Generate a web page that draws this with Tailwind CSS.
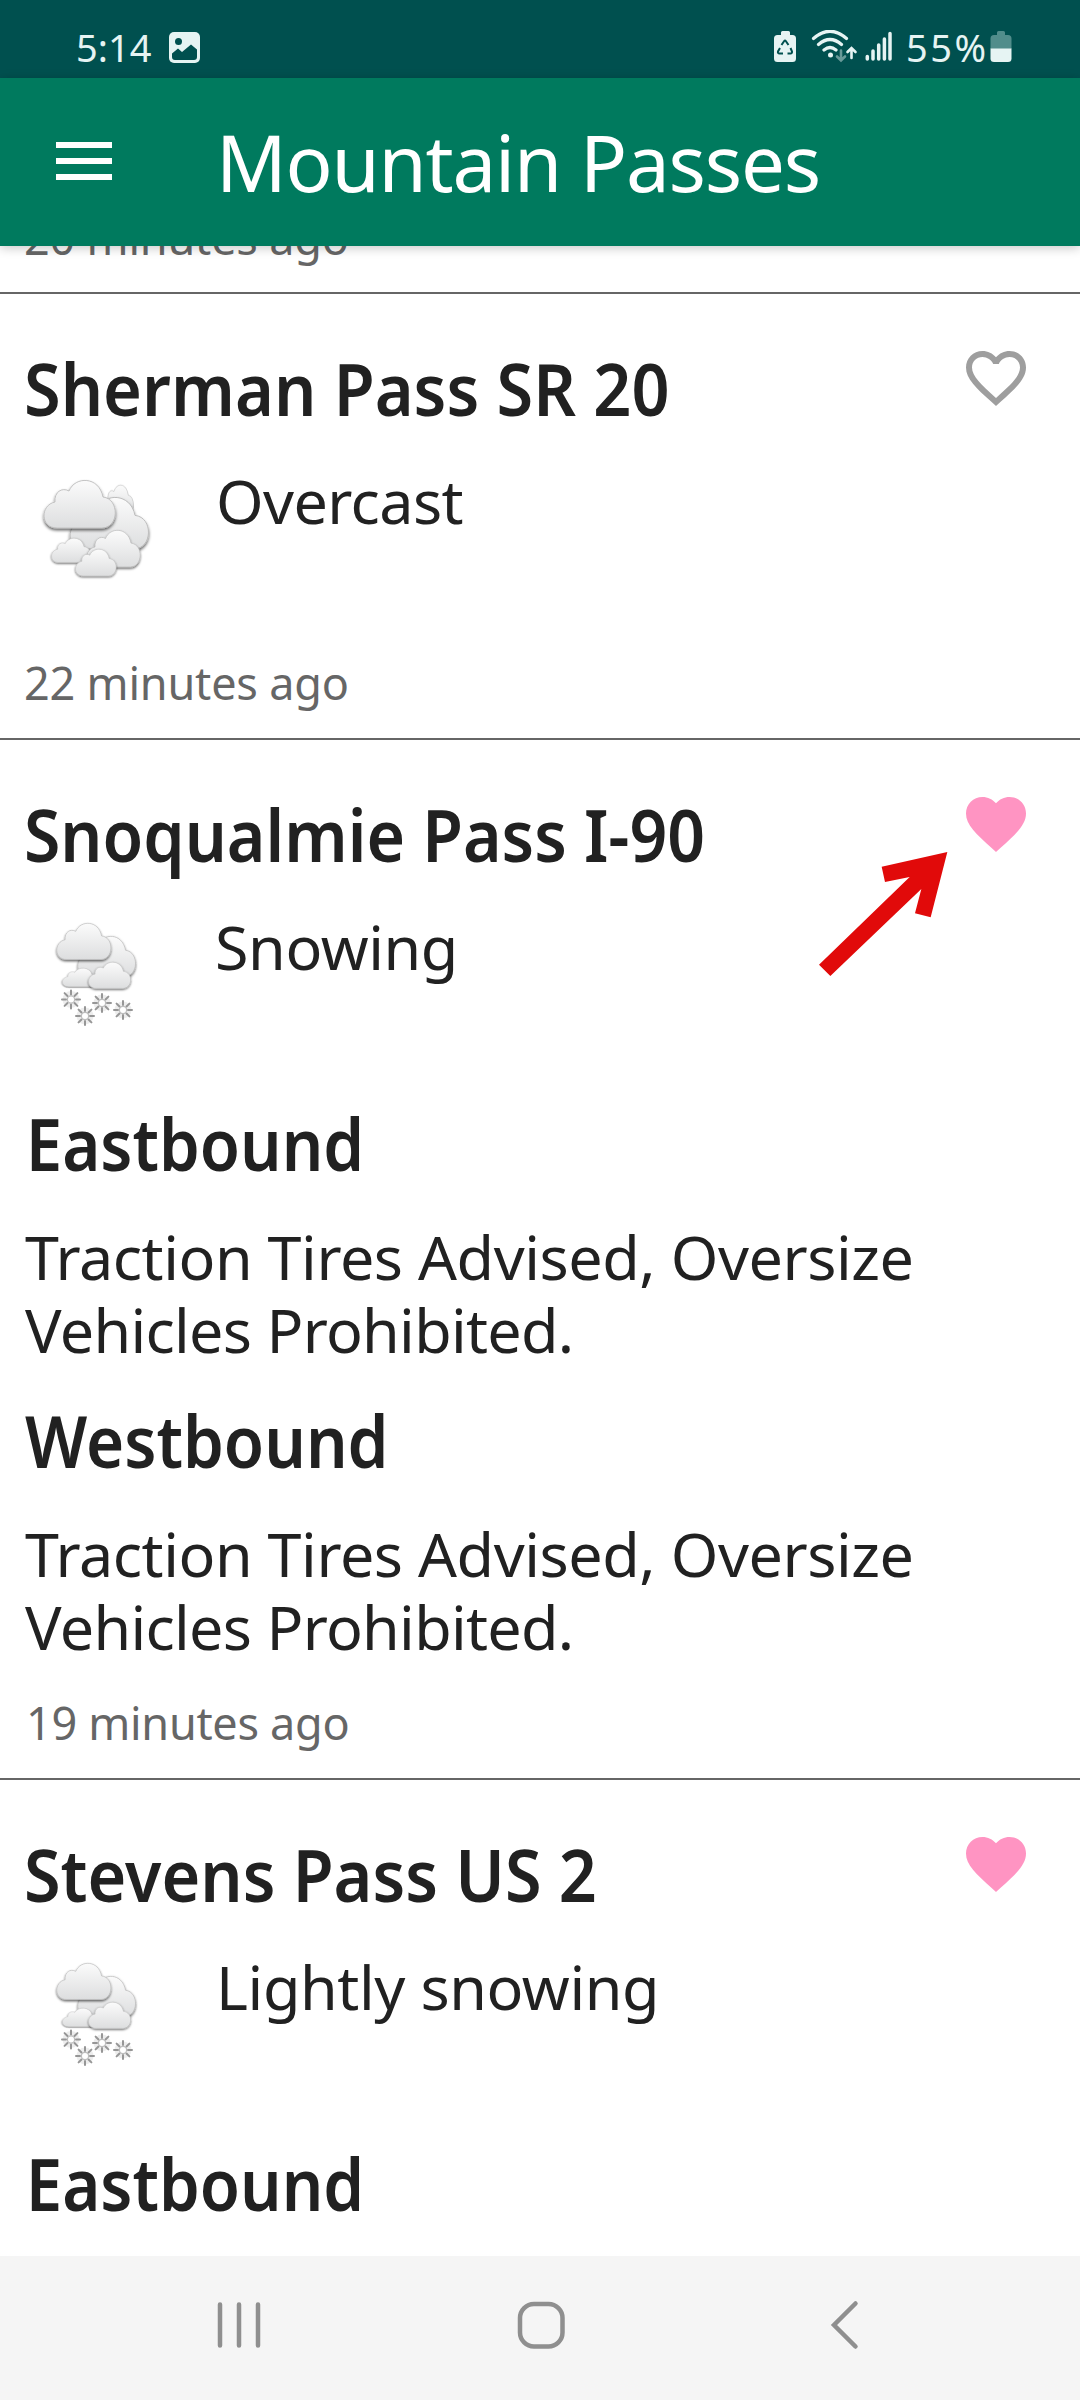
<!DOCTYPE html>
<html lang="en">
<head>
<meta charset="utf-8">
<title>Mountain Passes</title>
<script src="https://cdn.jsdelivr.net/npm/@tailwindcss/browser@4"></script>
</head>
<body class="bg-white">
<svg width="0" height="0" class="absolute">
  <defs>
    <linearGradient id="cl" x1="0" y1="0" x2="0" y2="1"><stop offset="0" stop-color="#fbfbfb"/><stop offset="1" stop-color="#dddedf"/></linearGradient>
    <filter id="sh" x="-20%" y="-20%" width="140%" height="150%"><feDropShadow dx="0" dy="2" stdDeviation="1.6" flood-color="#000" flood-opacity=".6"/></filter>
    <path id="heart" d="M12 21.35l-1.45-1.32C5.4 15.36 2 12.28 2 8.5 2 5.42 4.42 3 7.5 3c1.74 0 3.41.81 4.5 2.09C13.09 3.81 14.76 3 16.5 3 19.58 3 22 5.42 22 8.5c0 3.78-3.4 6.86-8.55 11.54L12 21.35z"/>
    <path id="cloud" d="M14 48C-3 48-3 25 12 22C11 12 19 7 26 11C32-4 56-4 60 17C77 19 76 48 59 48Z"/>
    <g id="flake" stroke-linecap="round" fill="none">
      <circle r="8.500" fill="#dedede" stroke="none" opacity=".55"/>
      <path stroke="#969696" stroke-width="2" d="M0-9V-5M0 9V5M-9 0H-5M9 0H5M-6.400-6.400L-3.500-3.500M6.400 6.400L3.500 3.500M-6.400 6.400L-3.500 3.500M6.400-6.400L3.500-3.500"/>
      <circle r="3.600" fill="#fff" stroke="#bdbdbd" stroke-width="1.200"/>
    </g>
    <g id="snow" stroke="#bdbdbd" stroke-width=".9" fill="url(#cl)">
      <use href="#cloud" filter="url(#sh)" transform="translate(47 36) scale(.81 .84)"/>
      <use href="#cloud" filter="url(#sh)" transform="translate(32 68) scale(.5 .39)"/>
      <use href="#cloud" filter="url(#sh)" transform="translate(58 62) scale(.59 .55)"/>
      <use href="#cloud" filter="url(#sh)" transform="translate(26 23) scale(.76 .76)"/>
      <use href="#flake" x="41" y="99.500"/><use href="#flake" x="55" y="116"/><use href="#flake" x="72" y="103"/><use href="#flake" x="93" y="110"/>
    </g>
  </defs>
</svg>
<div class="w-[1080px] h-[2400px] flex flex-col overflow-hidden font-['Noto_Sans',sans-serif] text-[#212121]">

  <!-- Status bar -->
  <div class="h-[78px] shrink-0 bg-[#00504f] text-[#e6f4f3] flex items-center justify-between pl-[76px] pr-[68px] pt-[16px]">
    <div class="flex items-center">
      <span class="w-[92px] text-[38px] leading-[48px]">5:14</span>
      <svg width="32" height="32" viewBox="0 0 32 32"><rect x="1" y="1" width="31" height="31" rx="5" fill="currentColor"/><g fill="#00504f"><circle cx="10.500" cy="10.500" r="3.500"/><path d="M4 22.500L10 17.500L14 21L23 13.500L29 18.500V26Q29 29 26 29H7Q4 29 4 26Z"/></g></svg>
    </div>
    <div class="flex items-center">
      <svg width="130" height="34" viewBox="0 0 130 34">
        <path fill="currentColor" d="M10 2.500Q10 1 11.500 1H17.500Q19 1 19 2.500V5H21.500Q25 5 25 8.500V28.500Q25 32 21.500 32H6.500Q3 32 3 28.500V8.500Q3 5 6.500 5H10Z"/>
        <g fill="none" stroke="#00504f" stroke-width="2"><path d="M10.500 15L13.200 11Q14 10 14.800 11L17.500 15M19.500 18L21 21.500Q21.300 23.500 19.500 23.500H16.500M12 23.500H8.500Q6.500 23.500 7 21.500L9 18"/></g>
        <g fill="none" stroke="currentColor" stroke-width="3.200" stroke-linecap="round">
          <path d="M42.500 8.500Q59 -6 75.500 8.500M47.500 14.500Q59 4.500 70.500 14.500M53 20Q59 15 65 20"/>
          <path stroke-width="2.600" d="M80.500 28V19M76.500 22L80.500 18L84.500 22"/>
          <path stroke-width="2.600" opacity=".45" d="M70 20.500V29.500M66 26.500L70 30.500L74 26.500"/>
        </g>
        <circle cx="59.500" cy="25" r="2.500" fill="currentColor"/>
        <g stroke="currentColor" stroke-width="3.500" stroke-linecap="round"><path d="M96.300 26.500V29M102 21V29M107.700 15V29M113.400 9V29M119 3.500V29"/></g>
      </svg>
      <span class="ml-[5px] w-[84px] text-[38px] leading-[48px] tracking-[2.500px]">55%</span>
      <svg width="22" height="34" viewBox="0 0 22 34"><path fill="#518d8b" d="M7 2.500Q7 1 8.500 1H13.500Q15 1 15 2.500V5H18Q21.500 5 21.500 8.500V19H.5V8.500Q.5 5 4 5H7Z"/><path fill="currentColor" d="M.5 18.500H21.500V28.500Q21.500 32 18 32H4Q.5 32 .5 28.500Z"/></svg>
    </div>
  </div>

  <!-- App bar -->
  <header class="relative z-10 h-[168px] shrink-0 bg-[#007a5e] text-white flex items-center pl-[56px] shadow-[0_2px_10px_rgba(0,0,0,0.22)]">
    <div class="w-[56px] mb-[2px] flex flex-col gap-[10px]"><i class="h-[6px] bg-white"></i><i class="h-[6px] bg-white"></i><i class="h-[6px] bg-white"></i></div>
    <h1 class="ml-[104px] text-[78px] leading-[106px] tracking-[-1.2px]">Mountain Passes</h1>
  </header>

  <main class="flex-1 min-h-0 overflow-hidden bg-white">
    <section class="flow-root h-[48px] border-b-2 border-[#666]">
      <p class="-mt-[38px] pl-[24px] text-[45px] leading-[60px] tracking-[-0.2px] text-[#666]">20 minutes ago</p>
    </section>

    <section class="h-[446px] border-b-2 border-[#666] pt-[45px] pl-[24px] pr-[48px]">
      <div class="flex items-start justify-between">
        <h2 class="text-[72px] leading-[98px] font-semibold whitespace-nowrap origin-left scale-x-[0.925]">Sherman Pass SR 20</h2>
        <svg class="mt-[3px] shrink-0 fill-[#9e9e9e]" width="72" height="72" viewBox="0 0 24 24"><path d="M16.500 3c-1.740 0-3.410.810-4.500 2.090C10.910 3.810 9.240 3 7.500 3 4.420 3 2 5.420 2 8.500c0 3.780 3.400 6.860 8.550 11.540L12 21.350l1.450-1.320C18.600 15.360 22 12.280 22 8.500 22 5.420 19.580 3 16.500 3zm-4.400 15.550l-.1.100-.1-.1C7.140 14.240 4 11.390 4 8.500 4 6.500 5.500 5 7.500 5c1.540 0 3.040.990 3.570 2.360h1.870C13.460 5.990 14.960 5 16.500 5c2 0 3.500 1.500 3.500 3.500 0 2.890-3.140 5.740-7.900 10.050z"/></svg>
      </div>
      <div class="mt-[28px] h-[188px] flex items-start">
        <svg class="ml-[6px] -mt-[5px]" width="140" height="140" viewBox="0 0 140 140">
          <g stroke="#bdbdbd" stroke-width=".9" fill="url(#cl)">
            <use href="#cloud" filter="url(#sh)" transform="translate(73 25) scale(.42 .6)"/>
            <use href="#cloud" filter="url(#sh)" transform="translate(39 37) scale(1.100 1.080)"/>
            <use href="#cloud" filter="url(#sh)" transform="translate(21 78) scale(.55 .51)"/>
            <use href="#cloud" filter="url(#sh)" transform="translate(56 70) scale(.75 .77)"/>
            <use href="#cloud" filter="url(#sh)" transform="translate(45 89) scale(.57 .56)"/>
            <use href="#cloud" filter="url(#sh)" transform="translate(13 20) scale(1 1)"/>
          </g>
        </svg>
        <p class="ml-[46px] text-[61px] leading-[72px] tracking-[-0.6px]">Overcast</p>
      </div>
      <p class="text-[45px] leading-[60px] tracking-[-0.2px] text-[#666]">22 minutes ago</p>
    </section>

    <section class="relative h-[1040px] border-b-2 border-[#666] pt-[45px] pl-[24px] pr-[48px]">
      <div class="flex items-start justify-between">
        <h2 class="text-[72px] leading-[98px] font-semibold whitespace-nowrap origin-left scale-x-[0.918]">Snoqualmie Pass I-90</h2>
        <svg class="mt-[3px] shrink-0 fill-[#ff94c2]" width="72" height="72" viewBox="0 0 24 24"><use href="#heart"/></svg>
      </div>
      <div class="mt-[28px] h-[183px] flex items-start">
        <svg class="ml-[6px] -mt-[11px]" width="140" height="140" viewBox="0 0 140 140"><use href="#snow"/></svg>
        <p class="ml-[45px] text-[61px] leading-[72px] tracking-[-0.4px]">Snowing</p>
      </div>
      <h3 class="pl-[2px] text-[72px] leading-[98px] font-semibold origin-left scale-x-[0.906]">Eastbound</h3>
      <p class="mt-[28px] pl-[1px] text-[61px] leading-[73px] tracking-[-0.44px]">Traction Tires Advised, Oversize<br><span class="tracking-[-0.7px]">Vehicles Prohibited.</span></p>
      <h3 class="mt-[25px] pl-[1px] text-[72px] leading-[98px] font-semibold origin-left scale-x-[0.908]">Westbound</h3>
      <p class="mt-[28px] pl-[1px] text-[61px] leading-[73px] tracking-[-0.44px]">Traction Tires Advised, Oversize<br><span class="tracking-[-0.7px]">Vehicles Prohibited.</span></p>
      <p class="mt-[30px] pl-[2px] text-[45px] leading-[60px] tracking-[-0.3px] text-[#666]">19 minutes ago</p>
      <!-- Annotation arrow pointing at the favourite heart -->
      <svg class="absolute left-[815px] top-[108px]" width="136" height="130" viewBox="45 234 408 390"><path fill="#e10a0a" d="M442 246L392 442L345 430L364 357L91 618L57 584L329 321L255 336L245 290Z"/></svg>
    </section>

    <section class="pt-[45px] pl-[24px] pr-[48px]">
      <div class="flex items-start justify-between">
        <h2 class="text-[72px] leading-[98px] font-semibold whitespace-nowrap origin-left scale-x-[0.923]">Stevens Pass US 2</h2>
        <svg class="mt-[3px] shrink-0 fill-[#ff94c2]" width="72" height="72" viewBox="0 0 24 24"><use href="#heart"/></svg>
      </div>
      <div class="mt-[28px] h-[183px] flex items-start">
        <svg class="ml-[6px] -mt-[11px]" width="140" height="140" viewBox="0 0 140 140"><use href="#snow"/></svg>
        <p class="ml-[46px] text-[61px] leading-[72px] tracking-[-0.4px]">Lightly snowing</p>
      </div>
      <h3 class="pl-[2px] text-[72px] leading-[98px] font-semibold origin-left scale-x-[0.906]">Eastbound</h3>
    </section>
  </main>

  <!-- System navigation -->
  <nav class="h-[144px] shrink-0 bg-[#f5f5f5] flex items-center pl-[214px] pb-[6px]">
    <svg width="50" height="50" viewBox="0 0 50 50" stroke="#8f8f8f" stroke-width="4.500" stroke-linecap="round"><path d="M6 4.500V45.500M25 4.500V45.500M44 4.500V45.500"/></svg>
    <svg class="ml-[252px]" width="50" height="50" viewBox="0 0 50 50" fill="none" stroke="#8f8f8f" stroke-width="4.500"><rect x="4" y="4" width="42.500" height="42.500" rx="14"/></svg>
    <svg class="ml-[263px]" width="32" height="50" viewBox="0 0 32 50" fill="none" stroke="#8f8f8f" stroke-width="4.500" stroke-linecap="round"><path d="M26.500 3.500L5 25L26.500 46.500"/></svg>
  </nav>
</div>
</body>
</html>
